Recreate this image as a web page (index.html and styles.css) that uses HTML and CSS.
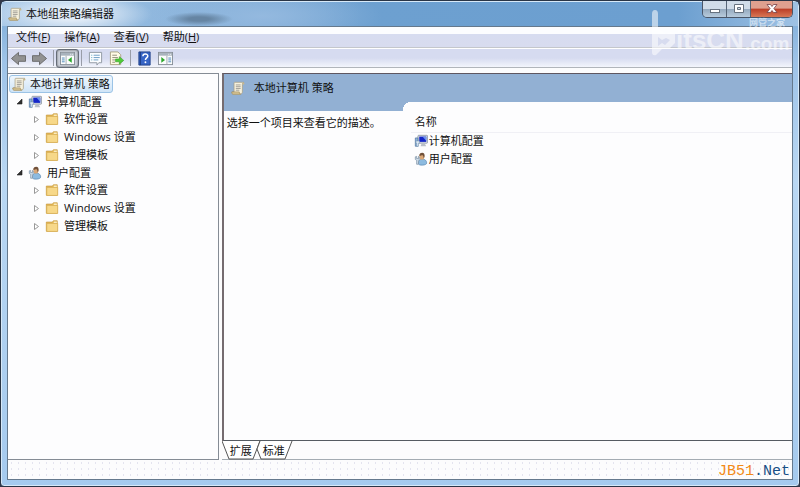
FILE: index.html
```
<!DOCTYPE html>
<html lang="zh-CN">
<head>
  <meta charset="UTF-8" />
  <meta name="viewport" content="width=device-width, initial-scale=1.0"/>
  <title>本地组策略编辑器</title>
  <link rel="stylesheet" href="styles.css">
</head>
<body>

  <!-- shared icons -->
  <svg class="icon-defs" aria-hidden="true">
    <symbol id="icon-scroll" viewBox="0 0 16 16">
      <path d="M4 1.500h10.500c-1 .5-1.500 1.500-1.500 2.500v8.500c0 1.500-1 2.500-2.500 2.500H2.500C1.500 15 .8 14 1 12.500h2.500V3c0-.8.2-1.300.5-1.500z" fill="#f6f1dd" stroke="#a39a80" stroke-width=".8"/>
      <path d="M1 12.500h8.500c0 1.500.5 2.500 1.500 2.500H2.500C1.500 15 .8 14 1 12.500z" fill="#dccb9b" stroke="#a08b5a" stroke-width=".8"/>
      <path d="M13 4h2c.6-1 .4-2-.5-2.500C13.500 2 13 3 13 4z" fill="#c9b88c"/>
      <path d="M5.500 4.500h5.500M5.500 6.500h5.500M5.500 8.500h5.500M5.500 10.500h4" stroke="#8e8b87" stroke-width=".9"/>
    </symbol>
    <symbol id="icon-computer" viewBox="0 0 16 16">
      <rect x="4.500" y="1.500" width="11" height="9" rx=".8" fill="#d5dbe4" stroke="#7b8898" stroke-width=".8"/>
      <rect x="6" y="3" width="8" height="6" fill="#1426c8"/>
      <path d="M10 3h4v5z" fill="#6d94ee"/>
      <path d="M8.500 11h4l1.500 3H7.500z" fill="#b9bfc8"/>
      <path d="M1.500 4.500h3v9.500h-3z" fill="#8db2da" stroke="#50759d" stroke-width=".8"/>
      <path d="M2.200 8h4v2.500h-1V14h-2v-3.500h-1z" fill="#dce9f5" stroke="#6587a8" stroke-width=".5"/>
    </symbol>
    <symbol id="icon-user" viewBox="0 0 16 16">
      <path d="M5 13c0-3.500 2-5 4.500-5s5 1.500 5 4.500c0 1.500-2 2.500-5 2.500S5 14.500 5 13z" fill="#8dbbe0" stroke="#5684ad" stroke-width=".7"/>
      <ellipse cx="9" cy="5" rx="2.800" ry="3.700" fill="#d9a777"/>
      <path d="M6 4.500C6 2 7.500.8 9.300.8 11.500.8 12.500 2.500 12 5.500l-1 2c0-2-.4-3.500-1.800-4C8 4.500 7 4.500 6 4.500z" fill="#705039"/>
      <path d="M1.500 5.500v3L3 9.500V14h2V9.500L6 8.500v-3L5 5v2.500H3V5z" fill="#d5e2ee" stroke="#6a8298" stroke-width=".7"/>
    </symbol>
    <symbol id="icon-folder" viewBox="0 0 16 16">
      <path d="M1.500 3.500h7l1-1.500h4.500v12h-12.500z" fill="#e8bd58" stroke="#c69a43" stroke-width=".8"/>
      <path d="M10 3h3.500v1.500H10z" fill="#fff6d4"/>
      <path d="M2 5h12.500v9.200H2z" fill="#f7d889" stroke="#d4aa50" stroke-width=".8"/>
    </symbol>
    <symbol id="icon-window" viewBox="0 0 16 16">
      <rect x=".5" y="1.500" width="15" height="13" fill="#fbfcfc" stroke="#878f98"/>
      <path d="M1 2h14v3H1z" fill="#a9b3bd"/>
      <path d="M11 3.500h1M13 3.500h1" stroke="#fff"/>
    </symbol>
  </svg>

  <div class="window">
    <header class="title-bar">
      <svg class="icon"><use href="#icon-scroll"/></svg>
      <h1>本地组策略编辑器</h1>
      <div class="window-buttons">
        <button class="minimize" aria-label="最小化">
          <svg viewBox="0 0 14 12"><rect x="2.500" y="6.500" width="9" height="3" fill="#fff" stroke="#66727f"/></svg>
        </button>
        <button class="maximize" aria-label="最大化">
          <svg viewBox="0 0 14 12"><path d="M2.500 1.500h9v8h-9zM5.500 4.500v2h3v-2z" fill="#fff" fill-rule="evenodd" stroke="#66727f"/></svg>
        </button>
        <button class="close" aria-label="关闭">
          <svg viewBox="0 0 14 12"><path d="M2 1.500h3.500L7 3.500l1.500-2H12L8.900 5.500 12 9.500H8.500L7 7.500l-1.500 2H2l3.100-4z" fill="#fff" stroke="#754047" stroke-width=".8"/></svg>
        </button>
      </div>
    </header>

    <div class="client">
      <nav class="menu-bar">
        <button>文件(<u>F</u>)</button>
        <button>操作(<u>A</u>)</button>
        <button>查看(<u>V</u>)</button>
        <button>帮助(<u>H</u>)</button>
      </nav>

      <div class="toolbar">
        <button aria-label="后退">
          <svg class="icon" viewBox="0 0 16 16"><path d="M.5 8l7.500-6.500v3.500h7.500v6H8v3.500z" fill="#929292" stroke="#686868"/></svg>
        </button>
        <button aria-label="前进">
          <svg class="icon" viewBox="0 0 16 16"><path d="M15.500 8L8 1.500V5H.5v6H8v3.500z" fill="#929292" stroke="#686868"/></svg>
        </button>
        <span class="separator"></span>
        <button class="pressed" aria-label="显示/隐藏控制台树">
          <svg class="icon" viewBox="0 0 16 16">
            <use href="#icon-window"/>
            <path d="M2 7.500h3M2 9.500h3M2 11.500h3" stroke="#4e89bb"/>
            <path d="M6.500 5v9" stroke="#a2a9b1"/>
            <path d="M12.500 6.500v6L8.500 9.500z" fill="#2ca82c"/>
          </svg>
        </button>
        <span class="separator"></span>
        <button aria-label="属性">
          <svg class="icon" viewBox="0 0 16 16">
            <path d="M1.500 1.500h13v11h-3l-2 2.500v-2.500h-8z" fill="#fbfdff" stroke="#9099a2"/>
            <path d="M3.500 4.500h1M3.500 7h1M3.500 9.500h1" stroke="#4ba3bd"/>
            <path d="M6 4.500h6.500M6 7h6.500M6 9.500h5" stroke="#6a9cc3"/>
          </svg>
        </button>
        <button aria-label="导出列表">
          <svg class="icon" viewBox="0 0 16 16">
            <path d="M1.500 1h8l3 3v10.500h-11z" fill="#fffbe6" stroke="#aaa282"/>
            <path d="M3.500 4.500h5M3.500 7h6M3.500 9.500h3M3.500 12h3" stroke="#8f8a79"/>
            <path d="M7 8.500h4V6l4.700 4-4.700 4v-2.500H7z" fill="#50cc38" stroke="#319526" stroke-width=".6"/>
          </svg>
        </button>
        <span class="separator"></span>
        <button aria-label="帮助">
          <svg class="icon" viewBox="0 0 16 16">
            <path d="M2 1h12v14H2z" fill="#3765c6" stroke="#24448c"/>
            <path d="M3.500 1v14" stroke="#183478"/>
            <path d="M6.300 5.500c0-3 5.200-3 5.200-.2 0 2-2.500 2-2.500 4.200" fill="none" stroke="#fff" stroke-width="1.600"/>
            <circle cx="9" cy="12" r="1" fill="#fff"/>
          </svg>
        </button>
        <button aria-label="显示/隐藏操作窗格">
          <svg class="icon" viewBox="0 0 16 16">
            <use href="#icon-window"/>
            <path d="M9.500 5v9" stroke="#a2a9b1"/>
            <path d="M11 7.500h3M11 9.500h3M11 11.500h3" stroke="#4e89bb"/>
            <path d="M3.500 6.500v6L7.500 9.500z" fill="#2ca82c"/>
          </svg>
        </button>
      </div>

      <main class="panes">
        <nav class="tree">
          <a href="#" class="root selected"><svg class="icon"><use href="#icon-scroll"/></svg><span>本地计算机 策略</span></a>
          <ul>
            <li>
              <div class="node group">
                <button class="toggle" aria-label="折叠"><svg viewBox="0 0 7 7"><path d="M6 1v5H1z" fill="#303030" stroke="#222" stroke-width=".6"/></svg></button>
                <a href="#"><svg class="icon"><use href="#icon-computer"/></svg><span>计算机配置</span></a>
              </div>
              <ul>
                <li class="node">
                  <button class="toggle" aria-label="展开"><svg viewBox="0 0 7 7"><path d="M1.500 .5l4 3-4 3z" fill="#fff" stroke="#999"/></svg></button>
                  <a href="#"><svg class="icon"><use href="#icon-folder"/></svg><span>软件设置</span></a>
                </li>
                <li class="node">
                  <button class="toggle" aria-label="展开"><svg viewBox="0 0 7 7"><path d="M1.500 .5l4 3-4 3z" fill="#fff" stroke="#999"/></svg></button>
                  <a href="#"><svg class="icon"><use href="#icon-folder"/></svg><span>Windows 设置</span></a>
                </li>
                <li class="node">
                  <button class="toggle" aria-label="展开"><svg viewBox="0 0 7 7"><path d="M1.500 .5l4 3-4 3z" fill="#fff" stroke="#999"/></svg></button>
                  <a href="#"><svg class="icon"><use href="#icon-folder"/></svg><span>管理模板</span></a>
                </li>
              </ul>
            </li>
            <li>
              <div class="node group">
                <button class="toggle" aria-label="折叠"><svg viewBox="0 0 7 7"><path d="M6 1v5H1z" fill="#303030" stroke="#222" stroke-width=".6"/></svg></button>
                <a href="#"><svg class="icon"><use href="#icon-user"/></svg><span>用户配置</span></a>
              </div>
              <ul>
                <li class="node">
                  <button class="toggle" aria-label="展开"><svg viewBox="0 0 7 7"><path d="M1.500 .5l4 3-4 3z" fill="#fff" stroke="#999"/></svg></button>
                  <a href="#"><svg class="icon"><use href="#icon-folder"/></svg><span>软件设置</span></a>
                </li>
                <li class="node">
                  <button class="toggle" aria-label="展开"><svg viewBox="0 0 7 7"><path d="M1.500 .5l4 3-4 3z" fill="#fff" stroke="#999"/></svg></button>
                  <a href="#"><svg class="icon"><use href="#icon-folder"/></svg><span>Windows 设置</span></a>
                </li>
                <li class="node">
                  <button class="toggle" aria-label="展开"><svg viewBox="0 0 7 7"><path d="M1.500 .5l4 3-4 3z" fill="#fff" stroke="#999"/></svg></button>
                  <a href="#"><svg class="icon"><use href="#icon-folder"/></svg><span>管理模板</span></a>
                </li>
              </ul>
            </li>
          </ul>
        </nav>

        <section class="details">
          <div class="details-view">
            <div class="banner">
              <svg class="icon"><use href="#icon-scroll"/></svg>
              <h2>本地计算机 策略</h2>
            </div>
            <div class="details-body">
              <p class="description">选择一个项目来查看它的描述。</p>
              <div class="list-panel">
                <table class="list">
                  <thead>
                    <tr><th>名称</th></tr>
                  </thead>
                  <tbody>
                    <tr><td><a href="#"><svg class="icon"><use href="#icon-computer"/></svg><span>计算机配置</span></a></td></tr>
                    <tr><td><a href="#"><svg class="icon"><use href="#icon-user"/></svg><span>用户配置</span></a></td></tr>
                  </tbody>
                </table>
              </div>
            </div>
          </div>
          <div class="tabs">
            <button class="tab active">
              <svg viewBox="0 0 38 19"><path d="M0 0l7 18h24l7-18" fill="#fff" stroke="#555"/></svg>
              <span>扩展</span>
            </button>
            <button class="tab">
              <svg viewBox="0 0 38 19"><path d="M5 0L2 8l4 10h24l7-18" fill="#fff" stroke="#555"/></svg>
              <span>标准</span>
            </button>
          </div>
        </section>
      </main>

      <footer class="status-bar">
        <span class="site"><b>JB51</b>.<i>Net</i></span>
      </footer>
    </div>

    <div class="watermark">
      <svg viewBox="0 0 142 48">
        <path d="M1 4q0-4 3-4t3 4v14l8 6 5-2 4 2v9l-5 5-8 1-6 6q-4 1-4-3zM7 27v9l4-3 3 2 5-5-4-2-4 2z" fill="#fff" fill-rule="evenodd"/>
        <text x="25" y="39" class="mark-name">itsCN</text>
        <text x="94" y="40" class="mark-com">.com</text>
        <text x="98" y="16" class="mark-cn">网管之家</text>
      </svg>
    </div>
  </div>

</body>
</html>
```
FILE: styles.css
```
* {
  box-sizing: border-box;
}

body {
  margin: 0;
  background: #34394a;
  font-family: "Open Sans", "Noto Sans CJK SC", sans-serif;
  font-size: 11px;
  line-height: 16px;
  color: #111;
}

h1, h2, p, ul {
  margin: 0;
  padding: 0;
  font-size: 11px;
  font-weight: normal;
}

ul {
  list-style: none;
}

a {
  color: inherit;
  text-decoration: none;
}

button {
  padding: 0;
  border: none;
  background: none;
  font: inherit;
  color: inherit;
}

svg {
  display: block;
}

.icon {
  width: 14px;
  height: 14px;
  flex: none;
}

.icon-defs {
  position: absolute;
  width: 0;
  height: 0;
}

.window {
  position: relative;
  display: flex;
  flex-direction: column;
  height: 100vh;
  padding: 1px 6px 6px;
  border: 1px solid #293546;
  border-radius: 6px 6px 4px 4px;
  background: linear-gradient(180deg, #79a9d6 0, #9ec3e8 60px, #b9d7f3 180px, #a5caee 100%);
  box-shadow: inset 0 0 0 1px #d7e9f8;
}

/* title bar */
.title-bar {
  display: flex;
  align-items: center;
  gap: 4px;
  height: 24px;
  margin: 0 -5px;
  padding-left: 6px;
  background:
    radial-gradient(ellipse 80px 22px at 70px 12px, #dfeaf6 30%, transparent),
    radial-gradient(ellipse 34px 7px at 197px 17px, #6685a3 30%, transparent),
    radial-gradient(ellipse 120px 30px at 260px 14px, #94b9df, transparent),
    linear-gradient(90deg, #a9c9e8, #6da0d0 45%, #6c9fd0 85%, #9fc2e4);
}

.window-buttons {
  display: flex;
  align-self: flex-start;
  margin: -1px 5px 0 auto;
  border: 1px solid #4a5668;
  border-top: none;
  border-radius: 0 0 5px 5px;
  overflow: hidden;
}

.window-buttons button {
  display: flex;
  align-items: center;
  justify-content: center;
  width: 24px;
  height: 16px;
  border-right: 1px solid #566577;
  background: linear-gradient(#d0dce8 50%, #94a9be 50%, #b8cbdc);
}

.window-buttons svg {
  width: 14px;
  height: 12px;
}

.window-buttons .close {
  width: 41px;
  border-right: none;
  background: linear-gradient(#dfa08f 45%, #bb3e27 50%, #d87755);
}

.client {
  display: flex;
  flex: 1;
  flex-direction: column;
  min-height: 0;
  border: 1px solid #65798d;
  background: #fcfcfd;
}

/* menu and toolbar */
.menu-bar {
  display: flex;
  gap: 14px;
  height: 21px;
  padding: 0 8px;
  border-bottom: 1px solid #c4c7cc;
  background: linear-gradient(#fcfdff 7px, #d7dcf0 7px, #d8dcef);
}

.menu-bar u {
  text-underline-offset: 1px;
}

.toolbar {
  display: flex;
  align-items: center;
  gap: 6px;
  height: 20px;
  padding: 0 3px;
  border-top: 1px solid #fff;
  border-bottom: 1px solid #b1b5bb;
  background: linear-gradient(#d6dbf0 50%, #f3f5fc);
}

.toolbar .icon {
  width: 15px;
  height: 15px;
}

.toolbar .separator {
  width: 1px;
  height: 16px;
  background: #999da8;
}

.toolbar .pressed {
  margin: 0 -4px;
  padding: 1px 3px;
  border: 1px solid #666d78;
  border-radius: 3px;
  background: #cbd0da;
  box-shadow: inset 0 0 2px #555;
}

/* panes */
.panes {
  display: grid;
  grid-template-columns: 27fr 73fr;
  gap: 3px;
  flex: 1;
  min-height: 0;
  padding-top: 5px;
}

.tree {
  padding: 1px;
  border: 1px solid #858c95;
  border-left: none;
  background: #fdfdfe;
}

.tree a {
  display: flex;
  align-items: center;
  gap: 5px;
}

.tree .root {
  width: fit-content;
  height: 18px;
  padding: 0 2px;
  gap: 4px;
  border: 1px solid #9bc3e6;
  border-radius: 3px;
}

.tree .selected {
  background: linear-gradient(#f0f7fd, #cfe4f7);
}

.node {
  display: flex;
  align-items: center;
  gap: 5px;
  height: 18px;
  padding-left: 24px;
}

.node.group {
  height: 17px;
  padding-left: 7px;
}

.toggle svg {
  width: 7px;
  height: 7px;
}

.details {
  display: flex;
  flex-direction: column;
  min-width: 0;
}

.details-view {
  display: flex;
  flex: 1;
  flex-direction: column;
  border-top: 1px solid #5e5660;
  border-left: 2px solid #756c70;
  border-bottom: 1px solid #555b62;
  background: #fdfdfe;
}

.banner {
  display: flex;
  align-items: center;
  gap: 9px;
  height: 28px;
  padding-left: 7px;
  background: #92b0d3;
}

.details-body {
  display: grid;
  grid-template-columns: 179px 1fr;
  flex: 1;
}

.description {
  padding: 4px 0 0 3px;
  border-top: 9px solid #92b0d3;
  white-space: nowrap;
}

.list-panel {
  background: radial-gradient(circle at 8px 8px, #fdfdfe 8px, #92b0d3 8px) 0 0 / 8px 8px no-repeat;
  padding: 10px 0 0 8px;
}

.list {
  width: 100%;
  border-collapse: collapse;
}

.list th {
  height: 20px;
  padding: 0 4px;
  border-bottom: 1px solid #f0f0f5;
  text-align: left;
  font-weight: normal;
}

.list td {
  height: 18px;
  padding: 0 3px;
}

.list a {
  display: flex;
  align-items: center;
  gap: 1px;
}

/* tabs under the details view */
.tabs {
  display: flex;
  height: 19px;
  border-bottom: 1px solid #a4acb3;
}

.tab {
  display: grid;
  align-items: center;
  width: 38px;
  margin-right: -5px;
}

.tab svg, .tab span {
  grid-area: 1 / 1;
}

.tab svg {
  width: 38px;
  height: 19px;
}

.status-bar {
  display: flex;
  align-items: flex-end;
  justify-content: flex-end;
  height: 19px;
  padding-right: 2px;
  background: radial-gradient(circle, #e4e4ef 1px, transparent 1px) 0 0 / 7px 6px;
}

.site {
  font-family: "Liberation Mono", monospace;
  font-size: 15px;
  line-height: 14px;
  color: #174f86;
}

.site b, .site i {
  font-weight: normal;
  font-style: normal;
}

.site b {
  color: #f28a16;
}

/* logo lying over the title and menu bars */
.watermark {
  position: absolute;
  top: 9px;
  right: 6px;
  width: 142px;
  opacity: .55;
  pointer-events: none;
}

.watermark text {
  fill: #fff;
  font-family: "Liberation Sans", "Noto Sans CJK SC", sans-serif;
  font-weight: bold;
}

.watermark .mark-name {
  font-size: 26px;
}

.watermark .mark-com {
  font-size: 19px;
}

.watermark .mark-cn {
  font-size: 9px;
}
```
